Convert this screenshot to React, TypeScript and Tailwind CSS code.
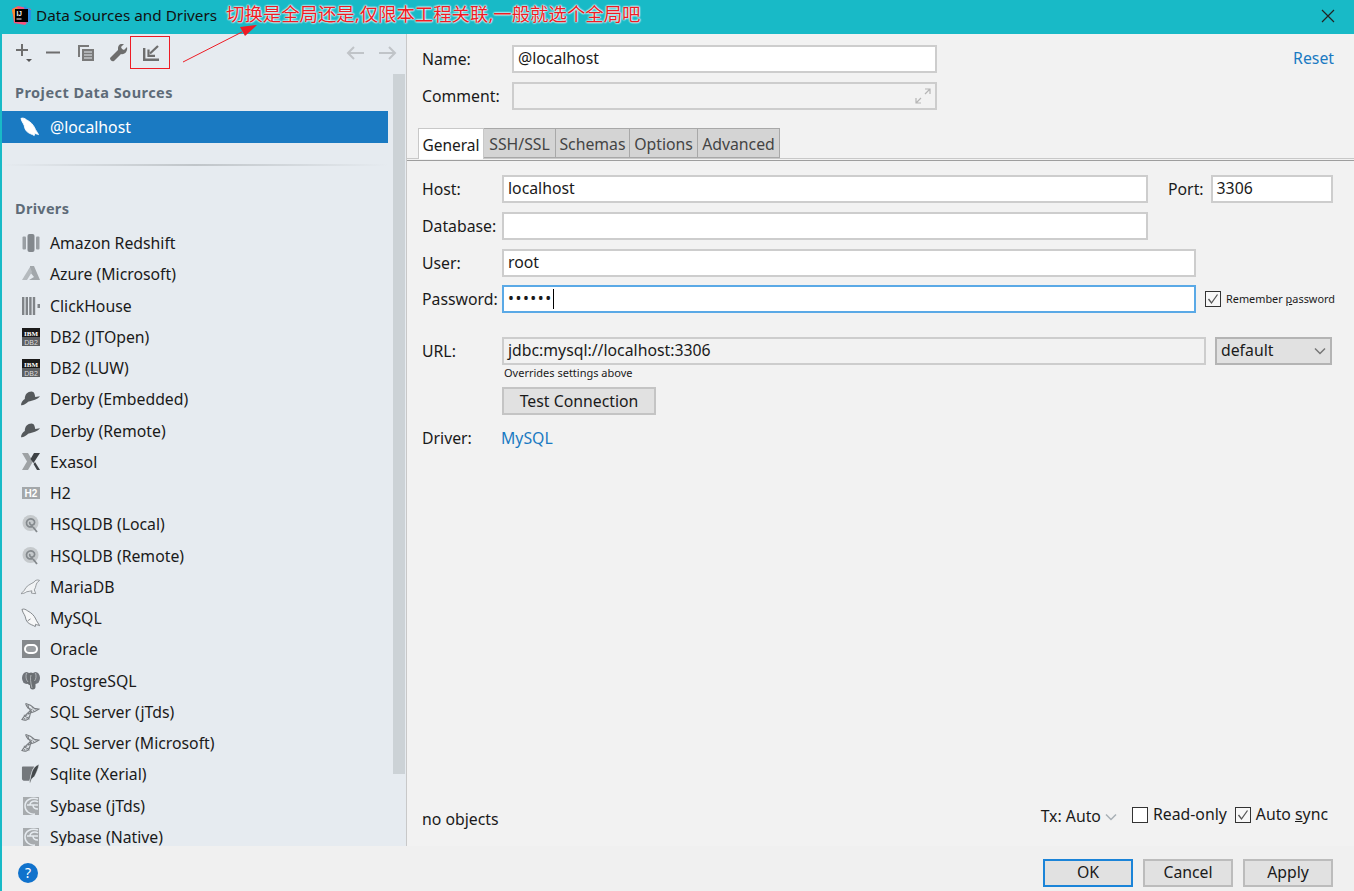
const font = "font-['Noto_Sans','Noto_Sans_CJK_SC',sans-serif]";

const Redshift = () => (
  <svg width="18" height="18" viewBox="0 0 18 18">
    <rect x="0.5" y="2.5" width="3.5" height="13" rx="1" fill="#9a9fa4" />
    <rect x="5.5" y="0" width="7" height="18" rx="2" fill="#83888d" />
    <rect x="14" y="2.5" width="3.5" height="13" rx="1" fill="#9a9fa4" />
  </svg>
);
const Azure = () => (
  <svg width="18" height="18" viewBox="0 0 18 18">
    <path d="M8 1 L12 1 L18 15 L7 15 L12 12 L8 7 Z" fill="#a2a7ab" />
    <path d="M8 2 L0 15 L5 15 L10 7 Z" fill="#b5babe" />
  </svg>
);
const ClickHouse = () => (
  <svg width="18" height="18" viewBox="0 0 18 18">
    <rect x="0" y="0" width="2.4" height="18" fill="#808488" />
    <rect x="3.6" y="0" width="2.4" height="18" fill="#808488" />
    <rect x="7.2" y="0" width="2.4" height="18" fill="#808488" />
    <rect x="10.8" y="0" width="2.4" height="18" fill="#808488" />
    <rect x="15.5" y="7" width="2.5" height="4" fill="#808488" />
  </svg>
);
const Db2 = () => (
  <svg width="18" height="18" viewBox="0 0 18 18">
    <rect width="18" height="9" fill="#1a1a1a" />
    <rect y="9" width="18" height="9" fill="#5c5f62" />
    <text x="9" y="7.5" textAnchor="middle" fontSize="7" fontWeight="700" fontFamily="Liberation Serif" fill="#fff">IBM</text>
    <text x="9" y="16.5" textAnchor="middle" fontSize="7" fontFamily="Liberation Sans" fill="#ddd">DB2</text>
  </svg>
);
const Derby = () => (
  <svg width="20" height="16" viewBox="0 0 20 16">
    <path d="M4 8 C4 3 7 0 11 0 C14 0 14.500 3 15 6 L20 5 C18 8 12 10 8 10.500 C5 13 2 15 0 14.500 C0 12 2 9 4 8 Z" fill="#55595c" />
  </svg>
);
const Exasol = () => (
  <svg width="18" height="17" viewBox="0 0 18 17">
    <path d="M0 0 L6 0 L11 8.5 L6 17 L0 17 L5 8.5 Z" fill="#9ea2a5" />
    <path d="M18 0 L12 0 L8.5 6 L11.5 10 Z M11.5 11 L15 17 L18 17 L13 9 Z" fill="#3e4246" />
  </svg>
);
const H2 = () => (
  <svg width="18" height="12" viewBox="0 0 18 12">
    <rect width="18" height="12" fill="#a3a7aa" />
    <text x="9" y="10" textAnchor="middle" fontSize="10" fontWeight="700" fontFamily="Liberation Sans" fill="#fff">H2</text>
  </svg>
);
const Hsqldb = () => (
  <svg width="18" height="18" viewBox="0 0 18 18">
    <circle cx="8.5" cy="8" r="8" fill="#c5c9cc" />
    <path d="M11 11.500 C7 13 4 10.500 4.500 7.500 C5 4.500 8.500 3 11 4.500 C13.500 6 13 9.500 10.500 10 C8.500 10.300 7 8.500 8 7" fill="none" stroke="#84898d" strokeWidth="1.7" />
    <path d="M11 12 L15 17" stroke="#84898d" strokeWidth="1.8" fill="none" />
  </svg>
);
const Maria = () => (
  <svg width="20" height="16" viewBox="0 0 20 16">
    <path d="M19.500 1 C17 0 14.500 1 13.500 3 C10 5 5 7 3.500 11.500 L0 15 C2 15 4 14.500 6 13 C8 12.500 10 12.500 11.500 12 L11 14.500 L15.500 15 L14 11 C16 8 15.500 5 17 3.500 Z" fill="#f1f3f5" stroke="#7d8286" strokeWidth="0.8" />
  </svg>
);
const Dolphin = ({ fill = "#f6f7f8", stroke = "#71767a" }: { fill?: string; stroke?: string }) => (
  <svg width="20" height="20" viewBox="0 0 20 20">
    <path d="M1 1 C3 0 5 1 7 2.500 C11 4.500 14 7.500 15.500 11 C16.500 13.500 18 15 19.500 18 C17.500 17 16.500 17.500 15.500 16.500 L15 19 C13 17.500 9 17 6.500 14 C4.500 11.500 5 8.500 3.500 6.500 C2.500 5 1.500 3 1 1 Z M7 13 L10 11" fill={fill} stroke={stroke} strokeWidth="0.9" />
  </svg>
);
const Oracle = () => (
  <svg width="18" height="18" viewBox="0 0 18 18">
    <rect width="18" height="18" fill="#85898c" />
    <rect x="3" y="5" width="12" height="8" rx="4" fill="#9a9ea1" stroke="#fff" strokeWidth="2" />
  </svg>
);
const Postgres = () => (
  <svg width="18" height="18" viewBox="0 0 18 18">
    <ellipse cx="4.5" cy="6" rx="4.500" ry="6" fill="#70747a" />
    <ellipse cx="13.5" cy="6" rx="4.500" ry="6" fill="#70747a" />
    <ellipse cx="9" cy="7" rx="5" ry="6.500" fill="#6a6e72" />
    <rect x="8" y="8" width="5.500" height="9.500" rx="2.700" fill="#6a6e72" />
    <path d="M4.500 1 C3.500 4 4 8 6 10 M13.500 1 C14.500 4 14 7 12.500 9 M9 3 C8 6 8.500 10 10 16" stroke="#c9cdd0" strokeWidth="0.7" fill="none" />
  </svg>
);
const SqlServer = () => (
  <svg width="20" height="20" viewBox="0 0 20 20" fill="none" stroke="#777b7f" strokeWidth="1.1">
    <path d="M5 1 C9 2 12 4 14 6 L19 7 C15 10 10 11 7 12" />
    <path d="M5 1 C5 4 8 6 10 8 C8 11 4 13 1 18 C4 19 8 19 9 15 C10 12 10 10 10 8" />
    <path d="M2 16 L8 12 M3 13 L9 18 M1 18 L9 15 M6 3 L11 8 M8 3 L7 7 M12 5 L11 10 M14 6 L13 10 M16 7 L15 9" strokeDasharray="1.3 0.8" />
  </svg>
);
const Sqlite = () => (
  <svg width="20" height="20" viewBox="0 0 20 20">
    <path d="M1 3 C1 2 2 2 3 2 L14 2 C11 6 10 11 9 17 L3 17 C2 17 1 16 1 15 Z" fill="#74787c" />
    <path d="M19 0 C15 1 12 5 11 10 C10 13 10 15 9 19 L10 19 C11 15 12 14 14 13 C16 9 18 5 19 0 Z" fill="#44484b" stroke="#e6ebf0" strokeWidth="0.5" />
  </svg>
);
const Sybase = () => (
  <svg width="16" height="18" viewBox="0 0 16 18">
    <rect width="16" height="18" fill="#a7abae" />
    <path d="M15 2 C8 0 2 3 2 9 C2 14 7 18 12 17 M4 8 L15 8 M7 8 C7 4 12 3 15 5 M10 8 C10 11 12 12 15 12" fill="none" stroke="#e6ebf0" strokeWidth="1.5" />
  </svg>
);

const drivers = [
  { name: "Amazon Redshift", icon: <Redshift /> },
  { name: "Azure (Microsoft)", icon: <Azure /> },
  { name: "ClickHouse", icon: <ClickHouse /> },
  { name: "DB2 (JTOpen)", icon: <Db2 /> },
  { name: "DB2 (LUW)", icon: <Db2 /> },
  { name: "Derby (Embedded)", icon: <Derby /> },
  { name: "Derby (Remote)", icon: <Derby /> },
  { name: "Exasol", icon: <Exasol /> },
  { name: "H2", icon: <H2 /> },
  { name: "HSQLDB (Local)", icon: <Hsqldb /> },
  { name: "HSQLDB (Remote)", icon: <Hsqldb /> },
  { name: "MariaDB", icon: <Maria /> },
  { name: "MySQL", icon: <Dolphin /> },
  { name: "Oracle", icon: <Oracle /> },
  { name: "PostgreSQL", icon: <Postgres /> },
  { name: "SQL Server (jTds)", icon: <SqlServer /> },
  { name: "SQL Server (Microsoft)", icon: <SqlServer /> },
  { name: "Sqlite (Xerial)", icon: <Sqlite /> },
  { name: "Sybase (jTds)", icon: <Sybase /> },
  { name: "Sybase (Native)", icon: <Sybase /> },
];

const Check = () => (
  <svg width="12" height="12" viewBox="0 0 12 12" fill="none" stroke="#555" strokeWidth="1.3">
    <path d="M1.5 6 L4.5 10 L10.5 1.5" />
  </svg>
);

const Chevron = ({ color = "#777" }: { color?: string }) => (
  <svg width="12" height="8" viewBox="0 0 12 8" fill="none" stroke={color} strokeWidth="1.5">
    <path d="M1 1.5 L6 6.5 L11 1.5" />
  </svg>
);

function Toolbar() {
  return (
    <div className="h-10 flex items-center justify-between pl-[13px] pr-[9px] pb-[3px] shrink-0">
      <div className="flex items-center">
        <svg width="20" height="22" viewBox="0 0 20 22" className="mr-[11px]">
          <path d="M1 8 H13 M7 2 V14" stroke="#6e6e6e" strokeWidth="2" />
          <path d="M11 17 H17 L14 20 Z" fill="#555" />
        </svg>
        <svg width="14" height="4" viewBox="0 0 14 4" className="mr-[18px]">
          <rect y="0.5" width="14" height="2" fill="#6e6e6e" />
        </svg>
        <svg width="16" height="16" viewBox="0 0 16 16" className="mr-[16px]">
          <path d="M0 0 H11 V2 H2 V12 H0 Z" fill="#7a7a7a" />
          <rect x="4" y="4" width="12" height="12" fill="#7a7a7a" />
          <path d="M6 7 H14 M6 10 H14 M6 13 H14" stroke="#e6ebf0" strokeWidth="1" />
        </svg>
        <svg width="18" height="18" viewBox="0 0 18 18" className="mr-[15px]">
          <path d="M17 3 L14 6 L12 5 L11 3 L14 0 C11 -1 8 1 8 4 C8 5 8 6 8 6 L0 14 C0 16 2 18 4 17 L11 10 C14 11 18 8 17 3 Z" fill="#6e6e6e" />
        </svg>
        <svg width="17" height="16" viewBox="0 0 17 16" fill="none" stroke="#6e6e6e" strokeWidth="2.4">
          <path d="M1.200 3 V14.800 H16" />
          <path d="M15 1 L7 8.500" strokeWidth="2.2" />
          <path d="M5.500 4.500 V10.800 H12" strokeWidth="2.2" />
        </svg>
      </div>
      <div className="flex items-center gap-[15px]">
        <svg width="18" height="14" viewBox="0 0 18 14" fill="none" stroke="#c0c4c8" strokeWidth="2">
          <path d="M18 7 H2 M8 1 L2 7 L8 13" />
        </svg>
        <svg width="18" height="14" viewBox="0 0 18 14" fill="none" stroke="#c0c4c8" strokeWidth="2">
          <path d="M0 7 H16 M10 1 L16 7 L10 13" />
        </svg>
      </div>
    </div>
  );
}

function Sidebar() {
  return (
    <aside className="w-[407px] shrink-0 bg-[#e6ebf0] border-l-2 border-[#18bac7] border-r border-r-[#c8c8c8] flex flex-col overflow-hidden">
      <Toolbar />
      <div className="flex flex-1 min-h-0">
        <div className="w-[386px] shrink-0 overflow-hidden">
          <div className="h-[37px] flex items-center pl-[13px] font-bold text-[14.5px] text-[#5e6b78] tracking-[0.45px]">
            Project Data Sources
          </div>
          <div className="h-8 bg-[#1a7ac2] flex items-center text-white text-[15.8px]">
            <div className="w-[19px] ml-[18px] mr-[11px] flex justify-center">
              <Dolphin fill="#fff" stroke="#fff" />
            </div>
            <span className="mt-[2px]">@localhost</span>
          </div>
          <div className="h-[2px] mt-[21px] bg-gradient-to-r from-transparent via-[#c0c5c9] to-transparent" />
          <div className="h-[31px] mt-[27px] flex items-center pl-[13px] font-bold text-[14.5px] text-[#5e6b78] tracking-[0.3px]">
            Drivers
          </div>
          <div className="mt-[3.6px]">
            {drivers.map((d) => (
              <div key={d.name} className="h-[31.26px] flex items-center text-[15.8px] leading-[18px] text-[#1a1a1a]">
                <div className="w-[22px] ml-[19px] mr-[7px] flex justify-center shrink-0 pr-[3px]">{d.icon}</div>
                {d.name}
              </div>
            ))}
          </div>
        </div>
        <div className="ml-[5px] w-3 h-[700px] bg-[#ccd2d6]" />
      </div>
    </aside>
  );
}

function Input({ className, children }: { className: string; children?: React.ReactNode }) {
  return (
    <div className={`h-7 shrink-0 bg-white border-2 border-[#cdcdcd] pl-[4px] pb-[1px] flex items-center text-[15.8px] text-[#1a1a1a] ${className}`}>
      {children}
    </div>
  );
}

function Tab({ label, active, w }: { label: string; active?: boolean; w: string }) {
  return active ? (
    <div className={`${w} h-[31px] bg-white border border-[#c8c8c8] border-b-0 pt-[3px] flex items-center justify-center text-[15.5px] text-[#1a1a1a] relative z-10`}>
      {label}
    </div>
  ) : (
    <div className={`${w} h-[30px] bg-[#d4d4d4] border border-[#a8a8a8] border-l-0 pt-[3px] flex items-center justify-center text-[15.8px] text-[#444]`}>
      {label}
    </div>
  );
}

function Label({ children, w }: { children: React.ReactNode; w: string }) {
  return <div className={`${w} shrink-0 mt-[2px] text-[15.8px] text-[#1a1a1a]`}>{children}</div>;
}

function Main() {
  return (
    <main className="flex-1 bg-[#f2f2f2] flex flex-col min-w-0">
      <div className="flex items-center pl-[15px] pr-5 mt-[11px]">
        <Label w="w-[90px]">Name:</Label>
        <Input className="w-[425px]">@localhost</Input>
        <a className="ml-auto text-[15.8px] text-[#1a7ac2]">Reset</a>
      </div>
      <div className="flex items-center pl-[15px] mt-[9px]">
        <Label w="w-[90px]">Comment:</Label>
        <div className="w-[425px] h-7 bg-[#f2f2f2] border-2 border-[#cdcdcd] flex items-center justify-end pr-1">
          <svg width="16" height="16" viewBox="0 0 16 16" fill="none" stroke="#b5b5b5" strokeWidth="1.2">
            <path d="M1 15 L6 10 M1 10 V15 H6 M15 1 L10 6 M10 1 H15 V6" />
          </svg>
        </div>
      </div>
      <div className="mt-[18px] flex pl-[11px] relative border-b border-[#c8c8c8] h-[31px]">
        <Tab label="General" active w="w-[66px]" />
        <Tab label="SSH/SSL" w="w-[72px]" />
        <Tab label="Schemas" w="w-[74px]" />
        <Tab label="Options" w="w-[68px]" />
        <Tab label="Advanced" w="w-[82px]" />
      </div>
      <div className="h-px mt-[1px] bg-[#9e9e9e]" />
      <div className="pl-[15px] pr-[20px]">
        <div className="flex items-center mt-[14px]">
          <Label w="w-[80px]">Host:</Label>
          <Input className="w-[646px]">localhost</Input>
          <span className="ml-5 mr-[7px] mt-[2px] text-[15.8px] text-[#1a1a1a]">Port:</span>
          <Input className="w-[122px]">3306</Input>
        </div>
        <div className="flex items-center mt-[9px]">
          <Label w="w-[80px]">Database:</Label>
          <Input className="w-[646px]" />
        </div>
        <div className="flex items-center mt-[9px]">
          <Label w="w-[80px]">User:</Label>
          <Input className="w-[694px]">root</Input>
        </div>
        <div className="flex items-center mt-[8px]">
          <Label w="w-[80px]">Password:</Label>
          <div className="w-[694px] h-7 shrink-0 bg-white border-2 border-[#5aa9e6] pl-[4px] flex items-center">
            <span className="text-[15.8px] leading-none tracking-[1.5px] text-[#1a1a1a]">••••••</span>
            <span className="w-px h-5 bg-black" />
          </div>
          <div className="ml-[9px] w-[16px] h-[16px] border border-[#333] bg-[#f7f7f7] flex items-center justify-center shrink-0">
            <Check />
          </div>
          <span className="ml-[5px] text-[10.9px] text-[#1a1a1a] whitespace-nowrap">
            Remember <span className="underline">p</span>assword
          </span>
        </div>
        <div className="flex items-center mt-6">
          <Label w="w-[80px]">URL:</Label>
          <div className="w-[704px] h-7 shrink-0 bg-[#f2f2f2] border-2 border-[#cdcdcd] pl-[4px] flex items-center text-[15.8px] text-[#1a1a1a]">
            jdbc:mysql://localhost:3306
          </div>
          <div className="ml-[9px] w-[117px] h-7 shrink-0 bg-[#e1e1e1] border-2 border-[#b4b4b4] pl-[4px] pr-1 flex items-center justify-between text-[15.8px] text-[#1a1a1a]">
            default
            <Chevron />
          </div>
        </div>
        <div className="pl-[80px]">
          <div className="pl-[2px] h-[17px] flex items-center text-[11px] text-[#1a1a1a]">Overrides settings above</div>
          <button className="mt-[5px] w-[154px] h-7 pt-[2px] bg-[#e1e1e1] border-2 border-[#c4c4c4] text-[15.8px] text-[#1a1a1a] flex items-center justify-center">
            Test Connection
          </button>
        </div>
        <div className="flex items-center mt-[10px]">
          <Label w="w-[79px]">Driver:</Label>
          <a className="mt-[2px] text-[15.8px] text-[#1a7ac2]">MySQL</a>
        </div>
      </div>
      <div className="mt-auto mb-[14px] flex items-end pl-[15px] pr-[26px] text-[15.8px] text-[#1a1a1a]">
        <span>no objects</span>
        <div className="ml-auto mb-[3px] flex items-center">
          <span className="mt-[4px]">Tx: Auto</span>
          <span className="ml-[4px] mt-[4px]"><Chevron color="#a8b0b6" /></span>
          <div className="ml-[15px] w-[16px] h-[16px] border border-[#333] bg-white" />
          <span className="ml-[5px]">Read-only</span>
          <div className="ml-[8px] w-[16px] h-[16px] border border-[#333] bg-[#f7f7f7] flex items-center justify-center">
            <Check />
          </div>
          <span className="ml-[5px]">Auto <span className="underline">s</span>ync</span>
        </div>
      </div>
    </main>
  );
}

export default function App() {
  return (
    <div className={`w-[1354px] h-[891px] flex flex-col relative overflow-hidden bg-[#f2f2f2] ${font}`}>
      <header className="h-[34px] shrink-0 bg-[#18bac7] flex items-center pl-3 pb-[3px] text-[15.3px] text-[#111] relative">
        <svg width="19" height="19" viewBox="0 0 19 19" className="mr-[5px]">
          <path d="M0 3 L6 0 L19 3 L19 13 L13 19 L2 17 Z" fill="#f5537d" />
          <path d="M12 0 L19 4 L19 14 L14 17 Z" fill="#2b8fe8" />
          <path d="M0 4 L5 1 L9 9 L3 16 Z" fill="#f98b2a" />
          <rect x="3" y="3" width="13" height="13" fill="#000" />
          <text x="4.5" y="10" fontSize="6.5" fontWeight="700" fontFamily="Liberation Sans" fill="#fff">IJ</text>
          <rect x="4.5" y="12.5" width="5" height="1" fill="#fff" />
        </svg>
        Data Sources and Drivers
        <svg width="14" height="14" viewBox="0 0 14 14" className="ml-auto mr-[19px]" fill="none" stroke="#222" strokeWidth="1.2">
          <path d="M1 1 L13 13 M13 1 L1 13" />
        </svg>
      </header>
      <div className="flex flex-1 min-h-0">
        <Sidebar />
        <Main />
      </div>
      <footer className="h-[45px] shrink-0 bg-[#f0f0f0] border-l-2 border-[#18bac7] flex items-center pl-[16px] pr-[21px] pt-[8px]">
        <div className="w-5 h-5 rounded-full bg-[#1072cc] text-white text-[14px] flex items-center justify-center">?</div>
        <button className="ml-auto w-[90px] h-7 bg-[#e1e1e1] border-2 border-[#1b84d8] text-[15.8px] text-[#1a1a1a]">OK</button>
        <button className="ml-[10px] w-[90px] h-7 bg-[#e1e1e1] border-2 border-[#bcbcbc] text-[15.8px] text-[#1a1a1a]">Cancel</button>
        <button className="ml-[10px] w-[90px] h-7 bg-[#e1e1e1] border-2 border-[#bcbcbc] text-[15.8px] text-[#1a1a1a]">Apply</button>
      </footer>

      {/* annotation added on top of the screenshot */}
      <div className="absolute left-[130px] top-[36px] w-10 h-[33px] border border-[#ee1c25]" />
      <svg width="80" height="40" viewBox="0 0 80 40" className="absolute left-[180px] top-[24px]">
        <path d="M3 38 L62 8" stroke="#ee1c25" strokeWidth="1" />
        <path d="M77 1 L60 3 L65 12 Z" fill="#ee1c25" />
      </svg>
      <div className="absolute left-[226px] top-[2px] text-[18.4px] leading-6 text-[#ee1c25] [text-shadow:0_0_2px_#fff,0_0_2px_#fff,0_0_2px_#fff]">
        切换是全局还是,仅限本工程关联,一般就选个全局吧
      </div>
    </div>
  );
}
